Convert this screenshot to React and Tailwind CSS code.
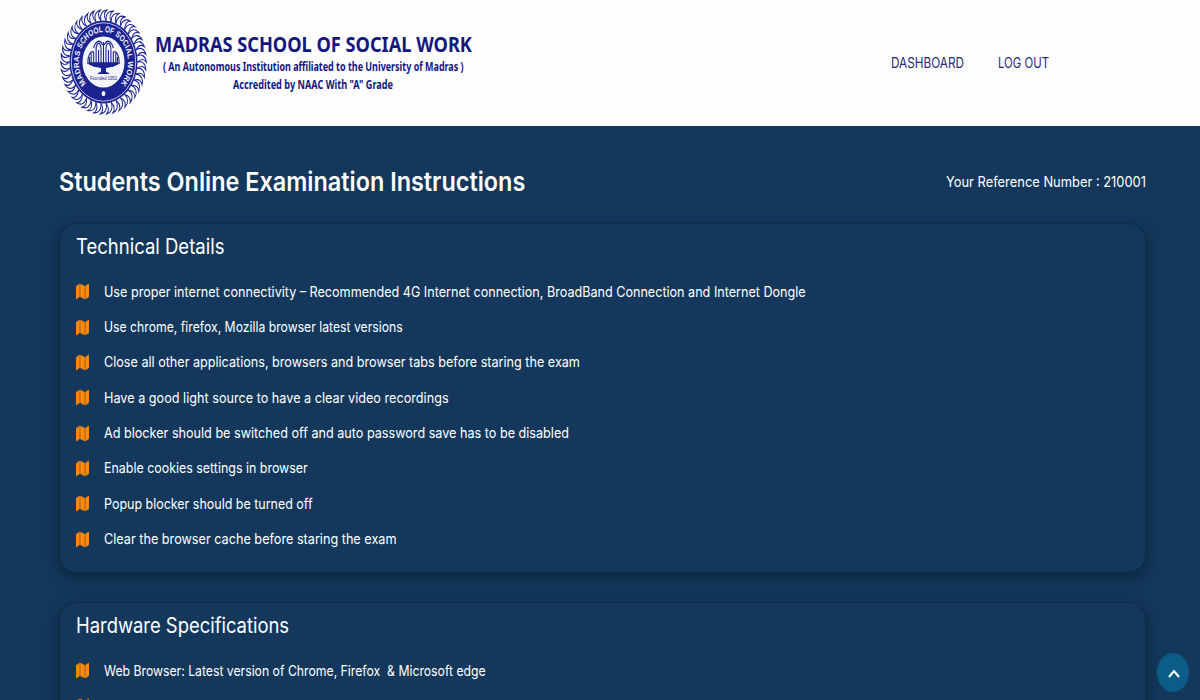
import React, { useLayoutEffect, useRef, useState } from "react";
import { FaMap } from "react-icons/fa";

function Fit({ width, className = "", children }) {
  const ref = useRef(null);
  const [scale, setScale] = useState(1);
  useLayoutEffect(() => {
    const measure = () => setScale(width / ref.current.offsetWidth);
    measure();
    document.fonts.ready.then(measure);
  }, [width]);
  return (
    <span className="block" style={{ width }}>
      <span
        ref={ref}
        className={"inline-block origin-left whitespace-pre " + className}
        style={{ transform: `scaleX(${scale})` }}
      >
        {children}
      </span>
    </span>
  );
}

const TEETH = Array.from({ length: 42 }, (_, i) => (i * 360) / 42);

function Emblem() {
  return (
    <svg viewBox="-53 -53 106 106" preserveAspectRatio="none" className="h-[106px] w-[87px] shrink-0">
      <defs>
        <path id="rim" d="M-20.5 22 A30 30 0 1 1 20.5 22" />
      </defs>
      <g fill="none" stroke="#1b2391" strokeWidth="1.15">
        {TEETH.map((a) => (
          <path key={a} transform={`rotate(${a})`} d="M-3 -41 C-5 -47 -2 -51.5 4 -52 C0.5 -49.5 0 -46 3 -41.5" />
        ))}
      </g>
      <circle r="41.5" fill="#1b2391" />
      <circle r="39.2" fill="none" stroke="#dfe0f5" strokeWidth="0.9" />
      <circle r="25.6" fill="#f4f4fc" />
      <text
        fill="#f3f3ff"
        fontSize="8.8"
        fontWeight="700"
        className="font-['Liberation_Sans',sans-serif]"
      >
        <textPath href="#rim" textLength="141" lengthAdjust="spacingAndGlyphs" startOffset="1">
          MADRAS SCHOOL OF SOCIAL WORK
        </textPath>
      </text>
      <ellipse cx="0" cy="31.5" rx="2.3" ry="2.6" fill="#fff" />
      <g fill="none" stroke="#1b2391" strokeWidth="1.3">
        <path d="M0 3V-20M-3 3V-12C-3 -20 -8 -21 -9 -14V3M3 3V-12C3 -20 8 -21 9 -14V3M-6 3V-12M6 3V-12M-1 -17C-5 -24 -10 -20 -12 -14M1 -17C5 -24 10 -20 12 -14" />
        <path d="M-12 3V-10C-16 -12 -19 -6 -19 0M12 3V-10C16 -12 19 -6 19 0M-15 3V-9M15 3V-9M-17 3V-5M17 3V-5M-20 1H20" />
      </g>
      <path d="M-18 1H18C16 5 9 5 3 6V9C3 11 7 10 7 12H-7C-7 10 -3 11 -3 9V6C-9 5 -16 5 -18 1Z" fill="#1b2391" />
      <text
        y="18.2"
        fontSize="5.6"
        textAnchor="middle"
        textLength="33"
        lengthAdjust="spacingAndGlyphs"
        fill="#1b2391"
        className="font-['Liberation_Sans',sans-serif]"
      >
        Founded 1952
      </text>
    </svg>
  );
}

function Item({ text, width }) {
  return (
    <li className="flex h-[35.35px] items-center">
      <FaMap
        preserveAspectRatio="none"
        className="h-[17px] w-[13px] shrink-0 stroke-[#e98012] stroke-[20px] text-[#ff8a08]"
      />
      <div className="ml-[15px] text-[14.5px] leading-5">
        {text && <Fit width={width}>{text}</Fit>}
      </div>
    </li>
  );
}

function Card({ title, titleWidth, items, className }) {
  return (
    <section
      className={
        "rounded-[18px] border border-[#102a44] bg-[#13385c] pl-[15.6px] shadow-[0_5px_14px_1px_rgba(8,22,38,0.5)] " +
        className
      }
    >
      <h2 className="pt-2 text-[21px] leading-[30px]">
        <Fit width={titleWidth}>{title}</Fit>
      </h2>
      <ul className="mt-[12px]">
        {items.map(([text, width], i) => (
          <Item key={i} text={text} width={width} />
        ))}
      </ul>
    </section>
  );
}

const TECHNICAL = [
  ["Use proper internet connectivity – Recommended 4G Internet connection, BroadBand Connection and Internet Dongle", 702],
  ["Use chrome, firefox, Mozilla browser latest versions", 299],
  ["Close all other applications, browsers and browser tabs before staring the exam", 476],
  ["Have a good light source to have a clear video recordings", 345],
  ["Ad blocker should be switched off and auto password save has to be disabled", 465],
  ["Enable cookies settings in browser", 204],
  ["Popup blocker should be turned off", 209],
  ["Clear the browser cache before staring the exam", 292.5],
];

const HARDWARE = [
  ["Web Browser: Latest version of Chrome, Firefox  & Microsoft edge", 382],
  ["", 0],
];

export default function App() {
  return (
    <div className="relative h-[700px] w-[1200px] overflow-hidden bg-[#13385c] font-['Inter',sans-serif] text-white">
      <header className="flex h-[126px] items-start justify-between bg-[#fdfdfd] pr-[151px] pl-[60px]">
        <div className="flex pt-[9px]">
          <Emblem />
          <div className="ml-[7px] flex w-[318px] flex-col items-center pt-[21px] font-['Noto_Sans',sans-serif] font-bold text-[#141780]">
            <div className="text-[21.5px] leading-7">
              <Fit width={317}>MADRAS SCHOOL OF SOCIAL WORK</Fit>
            </div>
            <div className="text-[11.5px] leading-[18px]">
              <Fit width={301}>( An Autonomous Institution affiliated to the University of Madras )</Fit>
            </div>
            <div className="text-[11.5px] leading-[18px]">
              <Fit width={160}>Accredited by NAAC With "A" Grade</Fit>
            </div>
          </div>
        </div>
        <nav className="flex gap-[34px] pt-[53px] text-[14.5px] leading-5 text-[#29297f]">
          <Fit width={73}>DASHBOARD</Fit>
          <Fit width={51}>LOG OUT</Fit>
        </nav>
      </header>
      <main className="pr-[54px] pl-[59px]">
        <div className="flex h-[97px] items-start justify-between">
          <h1 className="pt-[38px] text-[26px] leading-9 font-semibold">
            <Fit width={466}>Students Online Examination Instructions</Fit>
          </h1>
          <p className="pt-[46px] text-[14.5px] leading-5">
            <Fit width={200}>Your Reference Number : 210001</Fit>
          </p>
        </div>
        <Card title="Technical Details" titleWidth={148} items={TECHNICAL} className="h-[350px]" />
        <Card title="Hardware Specifications" titleWidth={213} items={HARDWARE} className="mt-[29px] h-[200px]" />
      </main>
      <button className="absolute top-[653px] left-[1157px] flex h-[39px] w-8 items-center justify-center rounded-[50%] bg-[#0b5c86]">
        <svg viewBox="0 0 12 9" className="mt-0.5 ml-px h-[9px] w-3" fill="none" stroke="white" strokeWidth="2">
          <path d="M1 8 L6 2 L11 8" />
        </svg>
      </button>
    </div>
  );
}
